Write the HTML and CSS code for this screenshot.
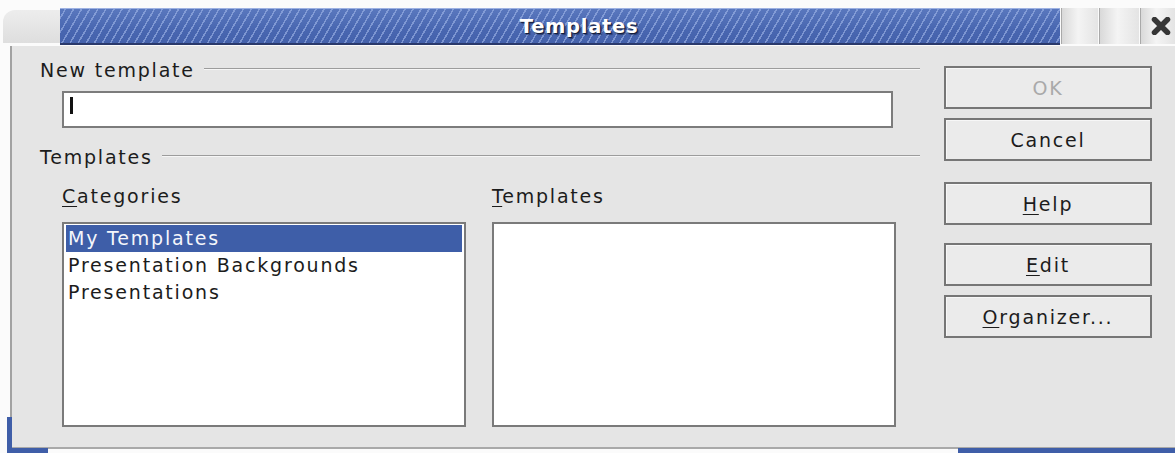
FILE: index.html
```html
<!DOCTYPE html>
<html lang="en">
<head>
<meta charset="utf-8">
<title>Templates</title>
<link rel="stylesheet" href="styles.css">
</head>
<body>
<div class="screen">
  <div class="titlerow">
    <div class="wm-left"></div>
    <div class="titlebar"><span class="title">Templates</span></div>
    <div class="wm-btn wm-min"></div>
    <div class="wm-btn wm-max"></div>
    <div class="wm-btn wm-close">
      <svg width="20" height="18" viewBox="0 0 20 18" aria-hidden="true">
        <path d="M3.5 2.5 L16.5 15.5 M16.5 2.5 L3.5 15.5" stroke="#363636" stroke-width="5.5" stroke-linecap="round" fill="none"/>
      </svg>
    </div>
  </div>

  <div class="dialog">
    <div class="main">
      <div class="group-head"><span>New template</span><i class="rule"></i></div>
      <div class="textbox"><span class="caret"></span></div>

      <div class="group-head group-second"><span>Templates</span><i class="rule"></i></div>
      <div class="columns">
        <div class="col">
          <div class="col-label"><u>C</u>ategories</div>
          <ul class="listbox">
            <li class="item selected">My Templates</li>
            <li class="item">Presentation Backgrounds</li>
            <li class="item">Presentations</li>
          </ul>
        </div>
        <div class="col">
          <div class="col-label"><u>T</u>emplates</div>
          <ul class="listbox"></ul>
        </div>
      </div>
    </div>

    <div class="buttons">
      <button class="btn btn-ok" disabled>OK</button>
      <button class="btn btn-cancel">Cancel</button>
      <button class="btn btn-help"><u>H</u>elp</button>
      <button class="btn btn-edit"><u>E</u>dit</button>
      <button class="btn btn-org"><u>O</u>rganizer...</button>
    </div>
  </div>

  <span class="desk desk-left"></span>
  <span class="desk desk-bottom"></span>
  <span class="desk desk-right"></span>
</div>
</body>
</html>
```

FILE: styles.css
```css
* {
  box-sizing: border-box;
}

html, body {
  margin: 0;
  padding: 0;
  background: #ffffff;
}

.screen {
  position: relative;
  width: 1175px;
  height: 453px;
  overflow: hidden;
  background: #fbfbfb;
  font-family: "DejaVu Sans", "Liberation Sans", sans-serif;
  font-size: 19px;
  letter-spacing: 1.8px;
  color: #1c1c1c;
}

/* ---- window manager title row ---- */
.titlerow {
  display: flex;
  margin-top: 8px;
  height: 37px;
}

.wm-left {
  margin-left: 3px;
  margin-top: 2px;
  width: 57px;
  height: 33px;
  border-radius: 12px 0 0 0;
  background: linear-gradient(#ededed, #dedede);
}

.titlebar {
  width: 1001px;
  height: 37px;
  display: flex;
  align-items: center;
  justify-content: center;
  padding-left: 38px;
  background:
    repeating-linear-gradient(120deg, rgba(160, 182, 232, 0) 0 4.5px, rgba(160, 182, 232, 0.6) 4.5px 6px, rgba(160, 182, 232, 0) 6px 7px),
    linear-gradient(#5a78be, #4866b0 60%, #4461ab);
  box-shadow: inset 0 1px 0 #9db1e2, inset 0 -2px 0 #2a396b;
}

.title {
  font-weight: bold;
  font-size: 19.5px;
  letter-spacing: 0.7px;
  color: #ffffff;
  text-shadow: 1px 1px 0 #141c3a, 2px 2px 1px rgba(20, 28, 58, 0.5);
}

.wm-btn {
  height: 36px;
  border-left: 1px solid #a9a9a9;
  background: linear-gradient(90deg, #d9d9d9, #f4f4f4 45%, #e4e4e4);
}

.wm-min {
  margin-left: 1px;
  width: 37px;
}

.wm-max {
  margin-left: 1px;
  width: 40px;
}

.wm-close {
  margin-left: 1px;
  width: 35px;
  display: flex;
  align-items: center;
  justify-content: flex-end;
  padding-right: 4px;
}

/* ---- dialog body ---- */
.dialog {
  display: flex;
  margin-top: 1px;
  margin-left: 10px;
  height: 403px;
  background: #e5e5e5;
  border-left: 2px solid #a2a2a2;
  border-bottom: 2px solid #a9a9a9;
}

.main {
  width: 908px;
  padding-left: 28px;
  padding-top: 12px;
}

.group-head {
  display: flex;
  align-items: center;
  gap: 9px;
  height: 24px;
  line-height: 24px;
  white-space: nowrap;
}

.group-head .rule {
  flex: 1;
  margin-top: -2px;
  border-top: 1px solid #9c9c9c;
  border-bottom: 1px solid #f6f6f6;
}

.group-second {
  margin-top: 17px;
}

.textbox {
  display: flex;
  align-items: flex-start;
  margin: 9px 0 0 22px;
  width: 831px;
  height: 37px;
  background: #ffffff;
  border: 2px solid #7c7c7c;
  padding: 4px 6px;
}

.caret {
  display: block;
  width: 3px;
  height: 17px;
  background: #111111;
}

.columns {
  display: flex;
  gap: 26px;
  margin: 15px 0 0 22px;
}

.col {
  width: 404px;
}

.col-label {
  height: 24px;
  line-height: 24px;
  white-space: nowrap;
}

u {
  text-decoration-thickness: 1px;
  text-underline-offset: 3px;
}

.listbox {
  list-style: none;
  margin: 14px 0 0;
  height: 205px;
  padding: 1px 2px;
  background: #ffffff;
  border: 2px solid #7a7a7a;
}

.item {
  height: 27px;
  line-height: 27px;
  padding-left: 2px;
  white-space: nowrap;
}

.item.selected {
  background: #3e5ea8;
  color: #f4f6fb;
}

/* ---- command buttons ---- */
.buttons {
  display: flex;
  flex-direction: column;
  width: 208px;
  margin-left: 24px;
  padding-top: 20px;
}

.btn {
  width: 208px;
  height: 43px;
  padding: 0;
  font: inherit;
  letter-spacing: 1.8px;
  color: #1c1c1c;
  background: #ebebeb;
  border: 2px solid #767676;
  box-shadow: inset 1px 1px 0 #f7f7f7;
  text-align: center;
}

.btn-ok {
  color: #a9a9a9;
}

.btn-cancel {
  margin-top: 9px;
}

.btn-help {
  margin-top: 21px;
}

.btn-edit {
  margin-top: 18px;
}

.btn-org {
  margin-top: 9px;
}

/* ---- desktop pieces peeking out around the dialog ---- */
.desk {
  position: absolute;
  background: #3f5ea8;
}

.desk-left {
  left: 7px;
  top: 417px;
  width: 5px;
  height: 36px;
}

.desk-bottom {
  left: 7px;
  top: 448px;
  width: 41px;
  height: 5px;
}

.desk-right {
  left: 958px;
  top: 448px;
  width: 217px;
  height: 5px;
}
```
